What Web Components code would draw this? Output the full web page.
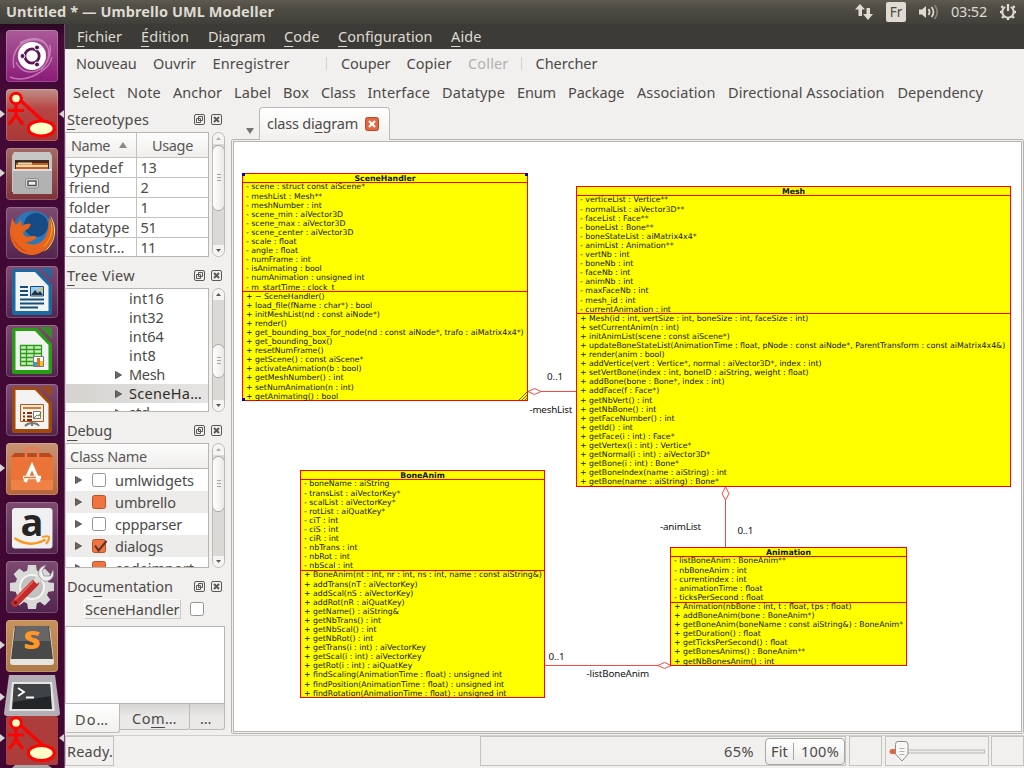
<!DOCTYPE html>
<html lang="fr">
<head>
<meta charset="utf-8">
<title>Umbrello UML Modeller</title>
<style>
html,body{margin:0;height:100%;overflow:hidden;background:#f1f0ee}
</style>
</head>
<body>
<uml-desktop></uml-desktop>
<script>
const def = (name, html, init) => customElements.define(name, class extends HTMLElement {
  connectedCallback() {
    if (this.shadowRoot) return;
    const root = this.attachShadow({mode: 'open'});
    root.innerHTML = typeof html === 'function' ? html(this) : html;
    if (init) init(this, root);
  }
});

/* A run of text whose tracking is adjusted so that it fills the width in "w". */
def('fit-text', `<style>:host{display:inline-block;white-space:pre;flex:none}span{display:inline-block}</style><span><slot></slot></span>`,
  (el, root) => {
    const w = parseFloat(el.getAttribute('w'));
    if (!w) return;
    const s = root.querySelector('span');
    const n = s.getBoundingClientRect().width;
    s.style.letterSpacing = ((w - n) / el.textContent.length) + 'px';
    el.style.width = w + 'px';
  });

/* Horizontal bar: entries are [html, left, right]; "|" is a separator. */
const barItems = (list, origin) => {
  let prev = origin;
  return list.map(([t, a, b, c]) => {
    const m = a - prev; prev = b;
    if (t === '|') { return `<i style="margin-left:${m}px;width:${b - a}px"></i>`; }
    return `<fit-text w="${b - a}" style="margin-left:${m}px${c ? ';color:' + c : ''}">${t}</fit-text>`;
  }).join('');
};
const barStyle = `:host{display:flex;align-items:center;flex:none;box-sizing:border-box}i{height:13px;background:#d5d3d0;flex:none}`;

def('menu-bar', `<style>${barStyle}:host{height:25px;padding-bottom:2px;background:#3c3b37;color:#dfdbd2;text-underline-offset:4px}</style>` + barItems([
  ['<u>F</u>ichier',77,122],['<u>É</u>dition',141,189],['D<u>i</u>agram',208,265.5],['<u>C</u>ode',284,319.5],['<u>C</u>onfiguration',338,432.5],['<u>A</u>ide',451,481.5]],65));
def('file-tools', `<style>${barStyle}:host{height:29px;padding-bottom:1px}</style>` + barItems([
  ['Nouveau',76,136.5],['Ouvrir',153,196],['Enregistrer',212.5,289.5],['|',326,327],['Couper',341,390.5],['Copier',406.5,451.5],['Coller',468,508.5,'#b3b1ae'],['|',521,522],['Chercher',535.5,597.5]],65));
def('shape-tools', `<style>${barStyle}:host{height:29px;padding-bottom:2px}</style>` + barItems([
  ['Select',73,115],['Note',127,161],['Anchor',173,222],['Label',234,271],['Box',283,309],['Class',321,355.5],['Interface',367.5,430],['Datatype',442,505],['Enum',517,556],['Package',568,624.5],['Association',637,715.5],['Directional Association',728,884.5],['Dependency',897.5,983]],65));

def('title-bar', `<style>
:host{display:flex;height:24px;flex:none;align-items:center;box-sizing:border-box;background:linear-gradient(#5d5b50,#504e45 30%,#403f3a);color:#dfdbd2;padding-left:6px}
b{font-weight:700;flex:1;font-size:14.5px;margin-top:-2px}svg{flex:none}em{font-style:normal;width:20px;height:20px;border-radius:2px;background:#dfdbd2;color:#4a4942;text-align:center;line-height:20px;margin-left:12px;font-size:13.5px}
</style><b><fit-text w="268">Untitled * — Umbrello UML Modeller</fit-text></b>
<svg width="19" height="18" viewBox="0 0 19 18" fill="#dfdbd2"><path d="M5 1l5 5.500H7V13H3.500V6.500H0z"/><path d="M11.500 5H15v6h3l-5 6-5-6h3.500z"/></svg>
<em>Fr</em>
<svg width="22" height="18" viewBox="0 0 22 18" style="margin-left:12px" fill="none" stroke="#dfdbd2" stroke-width="1.7"><path d="M1 6.500h3L8 3v12l-4-3.500H1z" fill="#dfdbd2" stroke="none"/><path d="M10.500 6q2.200 3 0 6M13.500 4q4 5 0 10"/><path d="M16.500 2q5.500 7 0 14" stroke="#85827a"/></svg>
<fit-text w="36" style="margin:-2px 0 0 11px">03:52</fit-text>
<svg width="18" height="18" viewBox="-9 -9 18 18" style="margin:0 7px 0 12px" fill="none" stroke="#dfdbd2"><path d="M-2.800-5A5.700 5.700 0 1 0 2.800-5" stroke-width="2"/><path d="M0-8V-1" stroke-width="2.200"/><path d="M-5-4L-6.500-6M5-4L6.500-6M-5.500 0H-8M5.500 0H8M-4 4L-6 6M4 4L6 6M0 5.500V8" stroke-width="2.400"/></svg>`);

/* ---- launcher ---- */
const umbrelloArt = `<g fill="none" stroke="#fb0500" stroke-width="3.1"><path d="M10 15V26L3 35.500M10 26l7 9.500M2 21.500h16M15 12l22 20"/><circle cx="10" cy="9.500" r="5.300" fill="#ffffc8"/><ellipse cx="35.300" cy="39.500" rx="13" ry="7.500" fill="#ffffc8"/></g>`;
const officeArt = (c, inner) => `<path d="M8 3h23l15 16v28q0 2-2 2H8q-2 0-2-2V5q0-2 2-2z" fill="${c}"/><path d="M9.500 6H29l13.500 14v25h-33z" fill="#f3f3f3"/><path d="M34 2h10q2 0 2 2v10z" fill="${c}" opacity=".8"/>${inner}`;
const art = {
  dash: ['#ab5b98,#8b1a77', `<g fill="none" stroke="#d7a5cf" stroke-width="1.500" opacity=".65"><path d="M8 38C2 12 32 2 41 16M14 13C38-1 53 22 35 40M44 15C48 40 19 52 10 32M4 47C20 54 44 40 46 27"/></g><circle cx="26" cy="26" r="14" fill="#fff"/><circle cx="26" cy="26" r="7.200" fill="none" stroke="#5f1456" stroke-width="2.800"/><g fill="#5f1456" stroke="#fff"><circle cx="16.500" cy="26" r="2.500"/><circle cx="31" cy="17.500" r="2.500"/><circle cx="31" cy="34.500" r="2.500"/></g>`],
  uml: ['#c09088,#b84545 38%,#a73836', umbrelloArt],
  files: ['#a46a66,#7c3338', `<path d="M6 8l2-4h36l2 4v36H6z" fill="#c7c7c5"/><path d="M9 12h34v9H9z" fill="#3e2a20"/><path d="M10 15h32v6H10z" fill="#c55e20"/><path d="M10 17h32v2H10zM12 14.500h14v2H12z" fill="#f3d7ab"/><path d="M7 21h39v25H7z" fill="#b2b2b2"/><path d="M7 21h39v2H7z" fill="#dedede"/><rect x="19.500" y="30.500" width="13" height="9.500" rx="2" fill="#d8d8d8" stroke="#8b8b8b"/><rect x="22" y="33" width="8" height="4.500" fill="#eee" stroke="#555" stroke-width="1.500"/>`],
  fox: ['#7e4b72,#52244e', `<circle cx="27" cy="25" r="21" fill="#2a78b8"/><circle cx="30" cy="18" r="12" fill="#164b85"/><path d="M44 12C53 27 45 45 27 48C12 48 3 37 4 22l2-11 4 7 5-5 1 6q4-3 9-2l-2 4-6 4q0 4 5 5 6-2 9 0-5 6-12 5 8 5 16 0 8-6 8-24z" fill="#e8641c"/><path d="M44 8c7 16 5 28-7 37C48 40 54 22 44 8z" fill="#ffe04b"/><path d="M44 10c3 14 1 22-8 31C46 34 49 22 44 10z" fill="#f9a92b"/><path d="M5 26q5 15 17 19-12-2-17-19z" fill="#bd3614"/>`],
  writer: ['#7e4b72,#52244e', officeArt('#1c6aa4', `<path d="M14 21h8M14 25h8M14 29h8M14 33.500h24M14 37.500h24M14 41.500h18" stroke="#14507f" stroke-width="1.900"/><path d="M24.500 20.500h13v9.500h-13z" fill="#9ccdf0" stroke="#14507f"/><path d="M25 29l4-5 3 3 2-2 3 4z" fill="#333"/><circle cx="35" cy="23" r="1.500" fill="#f2c02d"/>`)],
  calc: ['#7e4b72,#52244e', officeArt('#2a9d17', `<path d="M14 20h22v20H14z" fill="#cdeebf"/><path d="M14 20.500h22M14 24.500h22M14 28.500h22M14 32.500h22M14 36.500h22M14 40.500h16M14.500 20v21M20.500 20v21M28 20v14M35.500 20v12" stroke="#2a9d17" stroke-width="1.300"/><path d="M27.500 31.500h10v10h-10z" fill="#fff" stroke="#777"/><path d="M28 37h3v4h-3z" fill="#23a7df"/><path d="M31 33h3v8h-3z" fill="#e66c18"/><path d="M34 36h3v5h-3z" fill="#f4c11f"/>`)],
  impress: ['#7e4b72,#52244e', officeArt('#a1480d', `<path d="M14.500 20.500h23v17h-23z" fill="#f8eee4" stroke="#bd5615"/><path d="M17 24h18" stroke="#d7773a" stroke-width="2"/><path d="M17 29h2M17 32.500h2M17 36h2M21 29h5M21 32.500h5M21 36h5" stroke="#783413" stroke-width="2"/><path d="M27.500 27.500h7v7h-7z" fill="#fff" stroke="#777"/><path d="M28 34l3-3 2 1 2-4" stroke="#3b9b22" fill="none"/><path d="M19 42q3-3 7-3 5 0 7 3M26 38v4" stroke="#777" stroke-width="2" fill="none"/>`)],
  store: ['#c99375,#b5653a', `<path d="M5 14l4-4h34l4 4v33H5z" fill="#e6632a"/><path d="M5 14h42v33H5z" fill="#ec7338"/><path d="M5 14l4-4h34l4 4z" fill="#b64b1e"/><path d="M5 37h42v10H5z" fill="#f08146"/><path d="M20 18V8q0-3 6-3t6 3v10" fill="none" stroke="#e97950" stroke-width="2.500"/><path d="M19 39l7-16 7 16M17 34.500h18" stroke="#fff" stroke-width="3.500" fill="none"/><path d="M18 34.500h12" stroke="#ef7434" stroke-width="1.500"/>`],
  shop: ['#7e4b72,#52244e', `<rect x="6" y="6" width="40.500" height="40.500" rx="3" fill="#f0f0f0"/><text x="26" y="34" text-anchor="middle" font-family="Open Sans,sans-serif" font-weight="700" font-size="38" fill="#252525">a</text><path d="M8.500 36q15 10.500 31 1.500" stroke="#f89a22" stroke-width="2.500" fill="none"/><path d="M36 35q7-1.500 7 0 0 4-3 7" stroke="#f89a22" stroke-width="2" fill="none"/>`],
  config: ['#7e4b72,#52244e', `<g fill="#d9d9d8"><circle cx="26" cy="26" r="17"/><path d="M22 4h8l1 7H21zM22 48h8l1-7H21zM4 22v8l7 1V21zM48 22v8l-7 1V21z"/><path d="M22 4h8l1 7H21zM22 48h8l1-7H21zM4 22v8l7 1V21zM48 22v8l-7 1V21z" transform="rotate(45 26 26)"/></g><circle cx="26" cy="26" r="12" fill="#c2c2c1" stroke="#f4f4f3" stroke-width="2"/><path d="M9 42L29 22" stroke="#c32c2a" stroke-width="7.500" stroke-linecap="round"/><path d="M9 39L27 20.500" stroke="#ea6661" stroke-width="1.500"/><path d="M29 21L37 13" stroke="#ddd" stroke-width="5.500"/><path d="M40 4l-4 6 2 5 6 0 3-6q2 7-3 10-5 3-9-1-4-4-2-9 2-4 7-5z" fill="#eee" stroke="#888" stroke-width=".7"/><circle cx="9.500" cy="41.500" r="1.500" fill="#571f22"/>`],
  subl: ['#c7925b,#ae7a47', `<path d="M8 8h36l4 34q0 3-3 3H7q-3 0-3-3z" fill="#e7e4df"/><path d="M9 6h34l4 33H5z" fill="#494949"/><path d="M10 6h32l2 15H8z" fill="#666"/><text x="26" y="29" text-anchor="middle" font-family="Open Sans,sans-serif" font-weight="800" font-size="25" textLength="17" lengthAdjust="spacingAndGlyphs" fill="#ff9727">S</text>`]
};
const tile = (k) => `<launcher-tile art="${k}"></launcher-tile>`;
def('launcher-tile', el => `<style>:host{display:block;position:relative;width:52px;height:52px;margin:0 0 7px 6px;flex:none;border-radius:4px;overflow:hidden;background:linear-gradient(${art[el.getAttribute('art')][0]})}:host::after{content:"";position:absolute;inset:0;border-radius:4px;box-shadow:inset 0 0 0 1px rgba(255,255,255,.2)}svg{display:block}</style><svg width="52" height="52" viewBox="0 0 52 52">${art[el.getAttribute('art')][1]}</svg>`);
def('app-launcher', `<style>
:host{display:flex;flex-direction:column;width:65px;flex:none;box-sizing:border-box;background:linear-gradient(#2a0823,#430a37 14px,#400733);border-right:1px solid #7c4374;padding-top:6px;position:relative;overflow:hidden}
.term{width:56px;height:41px;margin:-4px 0 0 4px;display:block;flex:none;z-index:1}
.fold{width:52px;height:49px;margin:0 0 0 6px;display:block;flex:none;border-radius:2px}
.pip{position:absolute;left:0;width:5px;height:8px;background:#d9d5d3;clip-path:polygon(0 0,100% 50%,0 100%)}
.pip.r{left:59px;clip-path:polygon(100% 0,0 50%,100% 100%)}
</style>` + ['dash','uml','files','fox','writer','calc','impress','store','shop','config','subl'].map(tile).join('') + `
<svg class="term" viewBox="0 0 56 41"><path d="M5 0h46l5 38q0 3-3 3H3q-3 0-3-3z" fill="#b3adb4"/><path d="M8 7h40l3 29H5z" fill="#e5e3e3"/><path d="M10 9h36l2 25H8z" fill="#222629"/><path d="M10 9h36l1 12L9 27z" fill="#3f4345"/><path d="M14 13l6 4-6 4M22 22.500h8" stroke="#fff" stroke-width="1.800" fill="none"/></svg>
<svg class="fold" viewBox="0 0 52 49"><rect width="52" height="49" fill="#ad3c3c"/><g transform="translate(0 -2.500)">${umbrelloArt}</g></svg>
<svg width="40" height="3" style="margin-left:12px"><path d="M3 0h33l4 3H0z" fill="#aaa8a6"/></svg>
${[86,145,440,617,669,710].map(y => `<span class="pip" style="top:${y}px"></span>`).join('')}
<span class="pip r" style="top:86px"></span><span class="pip r" style="top:710px"></span>`);

/* ---- docks ---- */
def('dock-title', `<style>:host{display:flex;align-items:center;height:31px;box-sizing:border-box;padding:5px 5px 0 2px;flex:none;text-underline-offset:4px}div{flex:1}svg{margin-left:6px}</style>
<div><slot></slot></div>
<svg width="11" height="11" fill="none" stroke="#5b5955"><rect x=".5" y=".5" width="10" height="10" rx="1.500"/><path d="M4.500 2.500h4v4h-4zM2.500 4.500h4v4h-4z"/></svg>
<svg width="11" height="11" fill="none" stroke="#5b5955"><rect x=".5" y=".5" width="10" height="10" rx="1.500"/><path d="M3 3l5 5M8 3L3 8" stroke-width="2"/></svg>`);

def('scroll-bar', el => {
  const a = el.getAttribute('top'), h = el.getAttribute('size');
  return `<style>:host{display:flex;flex-direction:column;box-sizing:border-box;width:13px;border:1px solid #bdbab6;border-radius:7px;background:#dbd9d6;align-items:center;overflow:hidden;flex:none}
  .c{width:11px;height:11px;background:#f5f4f3;display:flex;align-items:center;justify-content:center;flex:none}
  .t{width:11px;height:${h}px;margin-top:${a}px;border-radius:6px;box-shadow:0 0 0 1px #a9a6a2;background:linear-gradient(90deg,#fff,#e9e8e6);display:flex;align-items:center;justify-content:center;flex:none}
  </style><div class="c"><svg width="5" height="3"><path d="M0 3L2.500 0 5 3z" fill="${a < 5 ? '#b0aeab' : '#5a5854'}"/></svg></div><div class="t"><svg width="4" height="8"><path d="M0 .5h4M0 3.500h4M0 6.500h4" stroke="#a7a5a2"/></svg></div><div style="flex:1"></div><div class="c"><svg width="5" height="3"><path d="M0 0L2.500 3 5 0z" fill="#5a5854"/></svg></div>`;
});

const viewBox = `:host{display:flex;justify-content:space-between;padding-right:2px;flex:none;box-sizing:border-box}.v{width:144px;box-sizing:border-box;border:1px solid #b8b5b1;border-left-color:#d5d3d0;background:#fff;overflow:hidden}.h{background:linear-gradient(#fdfdfd,#efeeec);border-bottom:1px solid #b8b5b1;color:#5a5855}scroll-bar{align-self:stretch}`;
def('stereotype-view', `<style>${viewBox}:host{height:125px}
.r{display:grid;grid-template-columns:70px 1fr;height:19px;line-height:19px;border-bottom:1px solid #c4c2be}
.r>*{padding-left:3px}.r>*+*{border-left:1px solid #c4c2be;padding-left:3.5px}
.h{height:24px;line-height:24px}.h>*{padding-left:5px!important}.h>*+*{padding-left:15px!important}</style>
<div class="v"><div class="r h"><div><fit-text w="39">Name</fit-text><svg width="8" height="6" style="margin:0 0 3px 9px;vertical-align:baseline"><path d="M0 6L4 0l4 6z" fill="#8b8986"/></svg></div><div><fit-text w="41">Usage</fit-text></div></div>
${[['typedef',54,'13',16],['friend',41,'2',7.5],['folder',41,'1',7.5],['datatype',60.5,'51',16],['constr…',56,'11',15]].map(r => `<div class="r"><div><fit-text w="${r[1]}">${r[0]}</fit-text></div><div><fit-text w="${r[3]}">${r[2]}</fit-text></div></div>`).join('')}</div>
<scroll-bar top="2" size="64"></scroll-bar>`);

const arrow = `<svg width="7" height="8"><path d="M.5 .5L6.500 4 .5 7.500z" fill="#6b6966" stroke="#45433f" stroke-width=".8"/></svg>`;
def('tree-view', `<style>${viewBox}:host{height:124px}.r{height:19px;display:flex;align-items:center;padding-left:49px;line-height:19px}.r span{width:14px;height:8px;display:flex;flex:none}.sel{background:linear-gradient(90deg,#d5d3d0,#e6e5e3);color:#2f2d2a}</style>
<div class="v">${[['int16',35],['int32',35],['int64',35],['int8',27],['Mesh',36,1],['SceneHa…',73,1,1],['std',21,1]].map(r => `<div class="r${r[3] ? ' sel' : ''}"><span>${r[2] ? arrow : ''}</span><fit-text w="${r[1]}">${r[0]}</fit-text></div>`).join('')}</div>
<scroll-bar top="45" size="32"></scroll-bar>`);

def('check-box', el => {
  const s = el.getAttribute('state');
  return `<style>:host{display:block;width:14px;height:14px;flex:none;position:relative}svg{display:block;overflow:visible}</style><svg width="14" height="14"><rect x=".5" y=".5" width="13" height="13" rx="2" fill="${s ? '#f0743f' : '#fff'}" stroke="${s ? '#b9502a' : '#96938f'}"/>${s === 'on' ? '<path d="M3 6.500l3.500 5L14.500 2" fill="none" stroke="#5c3426" stroke-width="2"/>' : ''}</svg>`;
});
def('debug-view', `<style>${viewBox}:host{height:125px}.h{height:24px;line-height:25px;padding-left:4px}.r{height:22px;line-height:22px;display:flex;align-items:center;padding-left:9px}.r:nth-child(odd){background:#edecea}check-box{margin:0 9px 0 10px}svg{flex:none}</style>
<div class="v"><div class="h"><fit-text w="77">Class Name</fit-text></div>${[['umlwidgets',79,''],['umbrello',61,'part'],['cppparser',67,''],['dialogs',48,'on'],['codeimport',79,'part']].map(r => `<div class="r">${arrow}<check-box state="${r[2]}"></check-box><fit-text w="${r[1]}">${r[0]}</fit-text></div>`).join('')}</div>
<scroll-bar top="2" size="54"></scroll-bar>`);

def('doc-view', `<style>:host{display:block;flex:none}
.n{display:flex;height:27px;padding-left:19px;align-items:flex-start}.n span{height:20px;line-height:18px;width:97px;box-sizing:border-box;border:1px solid #fff;border-right-color:#cbc8c4;border-bottom-color:#cbc8c4;display:flex}check-box{margin:3px 0 0 9px}
.t{height:78px;box-sizing:border-box;width:160px;border:1px solid #b8b5b1;border-left-color:#d5d3d0;background:#fff}
.tabs{display:flex;width:160px;height:30px;align-items:flex-start;text-underline-offset:3px}
.tabs div{box-sizing:border-box;height:26px;line-height:28px;border:1px solid #bdbab6;border-left:0;border-top:0;background:linear-gradient(#d7d5d2,#eae9e7 50%);border-radius:0 0 3px 0;text-align:center}
.tabs div:first-child{height:29px;line-height:30px;background:linear-gradient(#fff,#f1f0ee);border-radius:0 0 3px 3px}
</style><div class="n"><span><fit-text w="94.5">SceneHandler</fit-text></span><check-box></check-box></div><div class="t"></div>
<div class="tabs"><div style="width:55px"><fit-text w="34">Do…</fit-text></div><div style="width:70px"><fit-text w="45">Co<u>m</u>…</fit-text></div><div style="width:35px"><fit-text w="14">…</fit-text></div></div>`);

def('dock-column', `<style>:host{display:flex;flex-direction:column;width:162px;flex:none}.first{height:25px;padding-top:0}.first fit-text{position:relative;top:-1px}</style>
<dock-title class="first"><fit-text w="82"><u>S</u>tereotypes</fit-text></dock-title><stereotype-view></stereotype-view>
<dock-title><fit-text w="68"><u>T</u>ree View</fit-text></dock-title><tree-view></tree-view>
<dock-title><fit-text w="45"><u>D</u>ebug</fit-text></dock-title><debug-view></debug-view>
<dock-title><fit-text w="106">Doc<u>u</u>mentation</fit-text></dock-title><doc-view></doc-view>`);

/* ---- diagram ---- */
const classes = {
 SceneHandler: {x:242,y:173,w:286,sel:1,fit:278.5,a:`scene : struct const aiScene*
meshList : Mesh**
meshNumber : int
scene_min : aiVector3D
scene_max : aiVector3D
scene_center : aiVector3D
scale : float
angle : float
numFrame : int
isAnimating : bool
numAnimation : unsigned int
m_startTime : clock_t`,o:`− SceneHandler()
load_file(fName : char*) : bool
initMeshList(nd : const aiNode*)
render()
get_bounding_box_for_node(nd : const aiNode*, trafo : aiMatrix4x4*)
get_bounding_box()
resetNumFrame()
getScene() : const aiScene*
activateAnimation(b : bool)
getMeshNumber() : int
setNumAnimation(n : int)
getAnimating() : bool`},
 Mesh: {x:576,y:186,w:435,a:`verticeList : Vertice**
normalList : aiVector3D**
faceList : Face**
boneList : Bone**
boneStateList : aiMatrix4x4*
animList : Animation**
vertNb : int
boneNb : int
faceNb : int
animNb : int
maxFaceNb : int
mesh_id : int
currentAnimation : int`,o:`Mesh(id : int, vertSize : int, boneSize : int, faceSize : int)
setCurrentAnim(n : int)
initAnimList(scene : const aiScene*)
updateBoneStateList(AnimationTime : float, pNode : const aiNode*, ParentTransform : const aiMatrix4x4&amp;)
render(anim : bool)
addVertice(vert : Vertice*, normal : aiVector3D*, index : int)
setVertBone(index : int, boneID : aiString, weight : float)
addBone(bone : Bone*, index : int)
addFace(f : Face*)
getNbVert() : int
getNbBone() : int
getFaceNumber() : int
getId() : int
getFace(i : int) : Face*
getVertex(i : int) : Vertice*
getNormal(i : int) : aiVector3D*
getBone(i : int) : Bone*
getBoneIndex(name : aiString) : int
getBone(name : aiString) : Bone*`},
 BoneAnim: {x:300,y:470,w:245,a:`boneName : aiString
transList : aiVectorKey*
scalList : aiVectorKey*
rotList : aiQuatKey*
ciT : int
ciS : int
ciR : int
nbTrans : int
nbRot : int
nbScal : int`,o:`BoneAnim(nt : int, nr : int, ns : int, name : const aiString&amp;)
addTrans(nT : aiVectorKey)
addScal(nS : aiVectorKey)
addRot(nR : aiQuatKey)
getName() : aiString&amp;
getNbTrans() : int
getNbScal() : int
getNbRot() : int
getTrans(i : int) : aiVectorKey
getScal(i : int) : aiVectorKey
getRot(i : int) : aiQuatKey
findScaling(AnimationTime : float) : unsigned int
findPosition(AnimationTime : float) : unsigned int
findRotation(AnimationTime : float) : unsigned int`},
 Animation: {x:670,y:547,w:237,a:`listBoneAnim : BoneAnim**
nbBoneAnim : int
currentindex : int
animationTime : float
ticksPerSecond : float`,o:`Animation(nbBone : int, t : float, tps : float)
addBoneAnim(bone : BoneAnim*)
getBoneAnim(boneName : const aiString&amp;) : BoneAnim*
getDuration() : float
getTicksPerSecond() : float
getBonesAnims() : BoneAnim**
getNbBonesAnim() : int`}
};
def('uml-class', el => {
  const n = el.getAttribute('name'), c = classes[n];
  const rows = (s, p) => s.split('\n').map(t => `<div>${p} ${t}</div>`).join('');
  return `<style>:host{position:absolute;display:block;left:${c.x - 234}px;top:${c.y - 142}px;width:${c.w}px;box-sizing:border-box;background:#ff0;border:1px solid #f00;font:7.8px/9.1px "DejaVu Sans",sans-serif;color:#111}
  h4{margin:0;font:bold 7.8px/9.1px "DejaVu Sans",sans-serif;text-align:center;height:8.1px}
  section{position:relative;padding-left:3px}
  section::before{content:"";position:absolute;left:0;right:0;top:0;height:1px;background:#f00}
  section div{height:9.1px;white-space:pre;position:relative;top:.4px}
  i{position:absolute;width:3px;height:3px;background:#00c}svg{position:absolute;right:0;bottom:0}</style><h4>${n}</h4><section>${rows(c.a, '-')}</section><section>${rows(c.o, '+')}</section>` +
  (c.sel ? '<i style="left:-1px;top:-1px"></i><i style="right:-1px;top:-1px"></i><i style="left:-1px;bottom:-1px"></i><svg width="8" height="8"><path d="M0 8L8 0M3 8L8 3M6 8L8 6" stroke="#555500" stroke-width=".9"/></svg>' : '');
});
def('diagram-canvas', `<style>
:host{display:block;position:relative;flex:1;background:#fff;border:1px solid #b8b5b1;outline:0;font:9.8px/12px "Noto Sans",sans-serif;color:#111;overflow:hidden}
svg{position:absolute;left:0;top:0}fit-text{position:absolute}</style>
<svg width="787" height="590" viewBox="234 142 787 590" fill="#fff" stroke="#f44" stroke-width="1"><path d="M541 391.500H577M725.500 500V547M545 665.500H658"/><path d="M528 391.500l6.500-3 6.500 3-6.500 3zM725.500 487l3.500 6.500-3.500 6.500-3.500-6.500zM658 665.500l6.500-3 6.500 3-6.500 3z"/></svg>
${Object.keys(classes).map(n => `<uml-class name="${n}"></uml-class>`).join('')}
${[['0..1',547,377,16],['-meshList',529.5,410,42.5],['-animList',660,527,41],['0..1',737.5,531,15.5],['0..1',548.5,657,16],['-listBoneAnim',586.5,674,62.5]].map(l => `<fit-text w="${l[3]}" style="left:${l[1] - 234}px;top:${l[2] - 148}px">${l[0]}</fit-text>`).join('')}`);

def('diagram-area', `<style>
:host{display:flex;flex-direction:column;flex:1;min-width:0;margin-left:4px}
.tabs{display:flex;height:33px;align-items:flex-end;padding-left:15px;flex:none;z-index:1;margin-bottom:-1px}
.tab{margin-left:5px;width:131px;height:33px;box-sizing:border-box;border:1px solid #bdbab6;border-bottom:0;border-radius:4px 4px 0 0;background:linear-gradient(#fff,#f1f0ee);display:flex;align-items:center;padding-left:7px;text-underline-offset:3px}
.tab fit-text{margin-top:-2px}
.x{margin-left:7px}
.f{flex:1;display:flex;border:1px solid #b8b5b1;padding:1px;background:#f1f0ee;box-sizing:border-box;margin-bottom:1px;border-radius:2px}
</style><div class="tabs"><svg width="8" height="6" style="margin-bottom:6px"><path d="M0 0h8L4 6z" fill="#777571"/></svg>
<div class="tab"><fit-text w="91">class di<u>a</u>gram</fit-text><svg class="x" width="14" height="14"><rect x=".5" y=".5" width="13" height="13" rx="2" fill="#e2673d" stroke="#b34b28"/><path d="M4 4l6 6M10 4l-6 6" stroke="#fff" stroke-width="2.200"/></svg></div></div>
<div class="f"><diagram-canvas></diagram-canvas></div>`);

def('status-bar', `<style>
:host{display:flex;height:33px;box-sizing:border-box;flex:none;border-top:1px solid #d0cdca;align-items:flex-start}
.p{height:30px;box-sizing:border-box;border:1px solid #c6c3bf;display:flex;align-items:center;flex:none}
.b{box-sizing:border-box;width:80px;height:27px;border:1px solid #a9a6a2;border-radius:4px;background:linear-gradient(#fff,#ecebe9);display:flex;align-items:center;margin-left:11px;padding-left:5px}
.b i{width:1px;height:17px;background:#a9a6a2;margin:0 7px 0 5px}
</style><div class="p" style="width:49px;padding-left:1px"><fit-text w="46">Ready.</fit-text></div>
<div class="p" style="margin-left:366px;width:366px;padding-left:243px"><fit-text w="30">65%</fit-text><div class="b"><fit-text w="17">Fit</fit-text><i></i><fit-text w="38">100%</fit-text></div></div>
<div class="p" style="margin-left:3px;width:33px"></div>
<div class="p" style="margin-left:3px;width:104px"><svg width="100" height="24"><path d="M5 12.500h94" stroke="#bab7b3" stroke-width="4"/><path d="M6 12.500h92" stroke="#eceae8" stroke-width="2"/><path d="M6 12.500h8" stroke="#e2673d" stroke-width="5" stroke-linecap="round"/><path d="M12 2.500h7q3 0 3 3V15l-6 7-6.500-7V5.500q0-3 2.500-3z" fill="#f8f7f6" stroke="#8f8c88"/><path d="M13.500 9.500h5M13.500 12.500h5M13.500 15.500h5" stroke="#b3b0ad"/></svg></div>
<div class="p" style="margin-left:2px;width:33px"></div>`);

def('uml-desktop', `<style>
:host{display:flex;flex-direction:column;width:1024px;height:768px;background:#f1f0ee;font:14.5px/18px "Noto Sans","Open Sans",sans-serif;color:#4c4a47;overflow:hidden}
.m{display:flex;flex:1;min-height:0}.w{display:flex;flex-direction:column;flex:1;min-width:0}.c{display:flex;flex:1;min-height:0}
</style><title-bar></title-bar><div class="m"><app-launcher></app-launcher><div class="w"><menu-bar></menu-bar><file-tools></file-tools><shape-tools></shape-tools><div class="c"><dock-column></dock-column><diagram-area></diagram-area></div><status-bar></status-bar></div></div>`);
</script>
</body>
</html>
